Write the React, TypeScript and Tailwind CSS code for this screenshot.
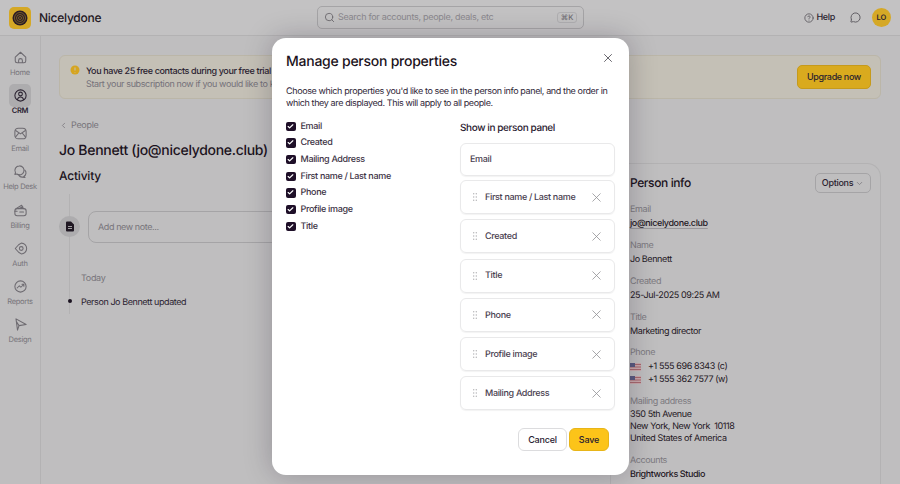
import { X, ChevronLeft, ChevronDown, Search, CircleHelp, MessageCircle, Check } from "lucide-react";

const navItems = [
  { label: "Home", icon: <path d="M3 9.5 10 3l7 6.5v5a2.5 2.5 0 0 1-2.5 2.5h-9A2.5 2.5 0 0 1 3 14.5v-5ZM7.5 17v-3a2.5 2.5 0 0 1 5 0v3" /> },
  { label: "CRM", active: true, icon: <><circle cx="10" cy="10" r="7.5" /><circle cx="10" cy="8" r="2.5" /><path d="M6 15.5c.5-2.3 2-3.5 4-3.5s3.5 1.2 4 3.5" /></> },
  { label: "Email", icon: <><rect x="2.5" y="3" width="15" height="14" rx="4.5" /><path d="M3.5 6 10 10.5 16.5 6M3.5 14.5 8 9M16.5 14.5 12 9" /></> },
  { label: "Help Desk", icon: <><path d="M8.5 2.5a6 6 0 0 0-5.2 9L2.5 14l2.6-.7A6 6 0 1 0 8.5 2.5Z" /><path d="M15.5 8a5 5 0 0 1-1.2 8.5l1.7 1.5-3.5-.5a5 5 0 0 1-5-3.5" /></> },
  { label: "Billing", icon: <><rect x="2.5" y="7.5" width="15" height="9.5" rx="3" /><path d="M4 7.5 11.5 3l2.5 4.5M7.5 7.5 13 5M9 12h5M2.5 11h3" /></> },
  { label: "Auth", icon: <><path d="M7.5 5 11 2.8a7 7 0 1 1 0 14.4L7.5 15 3 10Z" /><circle cx="11" cy="10" r="2.5" /></> },
  { label: "Reports", icon: <><circle cx="10" cy="10" r="7.5" /><path d="m5.5 12 3-3 2 2 4-4M12 7h2.5v2.5" /></> },
  { label: "Design", icon: <path d="M4 2.5 17.5 10 8 11.5 6 17.5 4 2.5ZM8 11.5 4.5 6" /> },
];

const fields = [
  { label: "Name", value: "Jo Bennett" },
  { label: "Created", value: "25-Jul-2025 09:25 AM" },
  { label: "Title", value: "Marketing director" },
];

const checks = ["Email", "Created", "Mailing Address", "First name / Last name", "Phone", "Profile image", "Title"];
const panelRows = ["First name / Last name", "Created", "Title", "Phone", "Profile image", "Mailing Address"];

function UsFlag() {
  return (
    <svg width="11" height="8" viewBox="0 0 11 8" className="shrink-0">
      <rect width="11" height="8" fill="#c9a9ac" />
      <path d="M0 1.5h11M0 4h11M0 6.5h11" stroke="#a8696f" strokeWidth="1" />
      <rect width="5" height="4" fill="#5a5a80" />
    </svg>
  );
}

function Logo() {
  return (
    <div className="w-[22px] h-[22px] rounded-[5px] bg-[#d5a826] flex items-center justify-center shrink-0">
      <svg width="16" height="16" viewBox="0 0 16 16" fill="none">
        <circle cx="8" cy="8" r="7.5" fill="#2a1c26" />
        <circle cx="8" cy="8" r="5.5" stroke="#8a6f2a" strokeWidth="0.8" />
        <circle cx="8" cy="8" r="3.5" stroke="#8a6f2a" strokeWidth="0.8" />
        <circle cx="8" cy="8" r="1.5" stroke="#8a6f2a" strokeWidth="0.8" />
      </svg>
    </div>
  );
}

function Grip() {
  return (
    <svg width="4" height="8" viewBox="0 0 4 8" fill="#b2b2b5" className="shrink-0">
      <circle cx="0.7" cy="0.8" r="0.7" /><circle cx="3.3" cy="0.8" r="0.7" />
      <circle cx="0.7" cy="4" r="0.7" /><circle cx="3.3" cy="4" r="0.7" />
      <circle cx="0.7" cy="7.2" r="0.7" /><circle cx="3.3" cy="7.2" r="0.7" />
    </svg>
  );
}

function PersonPanel() {
  return (
    <aside className="w-[271px] shrink-0 h-[340px] mt-[64px] rounded-t-[14px] border border-b-0 border-[#b3b2b3] pl-[19px] pr-[9px] pt-[9px]">
      <div className="flex items-center justify-between h-[20px]">
        <h2 className="text-[12px] tracking-[-0.4px] leading-[20px] font-medium text-[#1b1220]">Person info</h2>
        <button className="w-[56px] h-[20px] rounded-[5px] border border-[#a5a4a6] text-[9px] tracking-[-0.3px] font-medium text-[#2a2230] flex items-center justify-center gap-[2px]">
          Options
          <ChevronDown size={9} className="text-[#77747a]" />
        </button>
      </div>
      <div className="mt-[10px] text-[9px] tracking-[-0.4px] leading-[14px] text-[#1f1824]">
        <div className="h-[36px]">
          <div className="text-[#7d7a80]">Email</div>
          <div className="font-medium underline decoration-[#9a989c] underline-offset-2">jo@nicelydone.club</div>
        </div>
        {fields.map((f) => (
          <div key={f.label} className="h-[36px]">
            <div className="text-[#7d7a80]">{f.label}</div>
            <div>{f.value}</div>
          </div>
        ))}
        <div className="text-[#7d7a80] -mt-[1px]">Phone</div>
        <div className="flex items-center gap-[7px] h-[13px]"><UsFlag />+1 555 696 8343 (c)</div>
        <div className="flex items-center gap-[7px] h-[13px]"><UsFlag />+1 555 362 7577 (w)</div>
        <div className="mt-[9px] text-[#7d7a80]">Mailing address</div>
        <div className="leading-[12px]">350 5th Avenue</div>
        <div className="leading-[12px]">New York, New York&nbsp; 10118</div>
        <div className="leading-[12px]">United States of America</div>
        <div className="mt-[9px] text-[#7d7a80]">Accounts</div>
        <div className="font-medium">Brightworks Studio</div>
      </div>
    </aside>
  );
}

function ManageModal() {
  return (
    <div className="absolute inset-0 flex justify-center pointer-events-none">
      <div className="mt-[38px] ml-[1px] w-[357px] h-[437px] rounded-[14px] bg-white shadow-[0_0_28px_rgba(20,10,30,0.25)] px-[14px] pt-[13px] flex flex-col text-[#2a2030]">
        <div className="flex items-start justify-between">
          <h2 className="text-[14px] tracking-[-0.25px] leading-[22px] font-medium text-[#1b1220]">Manage person properties</h2>
          <X size={14} strokeWidth={1.5} className="text-[#55525a]" />
        </div>
        <p className="mt-[12.5px] text-[9px] tracking-[-0.38px] leading-[12.5px] text-[#2f2637]">
          Choose which properties you'd like to see in the person info panel, and the order in which they are displayed. This will apply to all people.
        </p>
        <div className="flex mt-[10.5px]">
          <ul className="w-[174px] shrink-0 -mt-[3px]">
            {checks.map((c) => (
              <li key={c} className="flex items-center gap-[5px] h-[16.67px] text-[9px] tracking-[-0.33px] font-medium text-[#3d3345]">
                <span className="w-[9.5px] h-[9.5px] rounded-[2px] bg-[#1e0f28] flex items-center justify-center">
                  <Check size={7} strokeWidth={4} className="text-white" />
                </span>
                {c}
              </li>
            ))}
          </ul>
          <div className="flex-1">
            <h3 className="text-[10px] tracking-[-0.4px] leading-[14px] font-medium text-[#2a2030]">Show in person panel</h3>
            <div className="mt-[8px] h-[33px] w-[155px] rounded-[6px] border border-[#e9e9ea] shadow-[0_1px_1px_rgba(0,0,0,0.05)] flex items-center px-[9px] text-[9px] tracking-[-0.33px] font-medium text-[#4a4150]">
              <span className="mt-[1px]">Email</span>
            </div>
            <div className="mt-[4px] flex flex-col gap-[5.3px]">
              {panelRows.map((r) => (
                <div key={r} className="h-[34px] w-[155px] rounded-[6px] border border-[#e9e9ea] shadow-[0_1px_1px_rgba(0,0,0,0.05)] flex items-center pl-[12px] pr-[10px] text-[9px] tracking-[-0.33px] font-medium text-[#4a4150]">
                  <Grip />
                  <span className="ml-[8px] mt-[1px] flex-1 whitespace-nowrap">{r}</span>
                  <X size={15} strokeWidth={1.25} className="text-[#8f8f93]" />
                </div>
              ))}
            </div>
          </div>
        </div>
        <div className="mt-[18px] flex justify-end gap-[2px] pr-[6px]">
          <button className="w-[49px] h-[23px] rounded-[6px] border border-[#dcdcde] text-[9px] tracking-[-0.2px] font-medium text-[#2a2030]">Cancel</button>
          <button className="w-[40px] h-[23px] rounded-[6px] bg-[#fcc419] border border-[#e8b518] text-[9px] tracking-[-0.2px] font-medium text-[#2a2030]">Save</button>
        </div>
      </div>
    </div>
  );
}

export default function App() {
  return (
    <div className="relative w-[900px] h-[484px] overflow-hidden bg-[#bfbebf] font-['Inter',sans-serif] [text-rendering:geometricPrecision] text-[#2a2230]">
      <header className="h-[36px] border-b border-[#b3b2b3] bg-[#c3c2c3] flex items-center pl-[9px] pr-[9px]">
        <Logo />
        <span className="ml-[8px] mt-[1px] w-[62px] whitespace-nowrap text-[12px] tracking-[-0.25px] font-medium text-[#1f1722]">Nicelydone</span>
        <div className="ml-[216px] w-[267px] h-[23px] rounded-[5px] border border-[#a5a4a6] flex items-center pl-[6px] pr-[6px]">
          <Search size={11} className="text-[#6d6a70]" />
          <span className="ml-[3px] mt-[1px] flex-1 text-[9px] tracking-[-0.28px] text-[#8a878d]">Search for accounts, people, deals, etc</span>
          <span className="w-[20px] h-[11px] rounded-[3px] border border-[#b0afb1] text-[7.5px] leading-[9px] text-[#6d6a70] text-center font-medium">⌘K</span>
        </div>
        <div className="ml-auto flex items-center">
          <CircleHelp size={10} className="text-[#5a575d]" />
          <span className="ml-[2px] mt-[1px] text-[9px] tracking-[-0.3px] font-medium text-[#2a2230]">Help</span>
          <MessageCircle size={11} className="ml-[15px] text-[#5a575d]" />
          <span className="ml-[11px] w-[19px] h-[19px] rounded-full bg-[#d5a826] text-[7.5px] font-semibold flex items-center justify-center">LO</span>
        </div>
      </header>
      <div className="flex h-[448px]">
        <nav className="w-[41px] shrink-0 border-r border-[#b3b2b3] flex flex-col items-center pt-[10px]">
          {navItems.map((n) => (
            <div key={n.label} className="h-[38.15px] w-full flex flex-col items-center">
              <div className={`w-[22px] h-[23px] rounded-[5px] flex items-center justify-center ${n.active ? "bg-[#adacae] text-[#2a2230]" : "text-[#6d6a70]"}`}>
                <svg width="15" height="15" viewBox="0 0 20 20" fill="none" stroke="currentColor" strokeWidth="1.4" strokeLinecap="round" strokeLinejoin="round">{n.icon}</svg>
              </div>
              <span className={`text-[7.5px] tracking-[-0.3px] leading-[10px] -mt-[1px] whitespace-nowrap ${n.active ? "font-semibold text-[#2a2230]" : "text-[#77747a]"}`}>{n.label}</span>
            </div>
          ))}
        </nav>
        <main className="flex-1 pl-[18px] pr-[19px] pt-[19px] min-w-0">
          <div className="h-[44px] rounded-[6px] border border-[#bbb6a8] bg-[#c4c0b6] flex items-center pl-[10px] pr-[9px]">
            <svg width="10" height="10" viewBox="0 0 10 10" className="self-start mt-[9px] shrink-0">
              <circle cx="5" cy="5" r="4.5" fill="#d6a520" />
              <path d="M5 2.5v3M5 7v.5" stroke="#c4c0b6" strokeWidth="1" />
            </svg>
            <div className="ml-[6px] mt-[3px] text-[9px] tracking-[-0.37px] leading-[12.5px]">
              <div className="font-medium text-[#2a2230]">You have 25 free contacts during your free trial</div>
              <div className="text-[#75727a]">Start your subscription now if you would like to keep using</div>
            </div>
            <button className="ml-auto w-[74px] h-[24px] rounded-[5px] bg-[#d9aa1e] border border-[#c69a1b] text-[9px] tracking-[-0.35px] font-medium text-[#2a2230]">Upgrade now</button>
          </div>
          <div className="flex">
            <section className="flex-1 min-w-0">
              <div className="mt-[20px] flex items-center text-[9px] tracking-[-0.3px] text-[#77747a]">
                <ChevronLeft size={9} />
                <span className="ml-[3px]">People</span>
              </div>
              <h1 className="mt-[6px] text-[14px] tracking-[-0.3px] leading-[24px] font-medium text-[#1b1220] whitespace-nowrap">Jo Bennett (jo@nicelydone.club)</h1>
              <h2 className="mt-[3px] text-[12px] tracking-[-0.2px] leading-[20px] font-medium text-[#1b1220]">Activity</h2>
              <div className="mt-[8px] ml-[10px] border-l border-[#b3b2b3] h-[120px] relative">
                <div className="absolute -left-[11px] top-[22px] w-[21px] h-[21px] rounded-full bg-[#adacae] flex items-center justify-center">
                  <svg width="10" height="11" viewBox="0 0 10 11">
                    <path d="M1 1.5A1 1 0 0 1 2 .5h4l3 3v6a1 1 0 0 1-1 1H2a1 1 0 0 1-1-1Z" fill="#1f1722" />
                    <path d="M3 5.5h4M3 7.5h4" stroke="#adacae" strokeWidth="0.9" />
                  </svg>
                </div>
                <div className="absolute left-[18px] top-[17px] w-[480px] h-[32px] rounded-[8px] border border-[#a5a4a6] flex items-center pl-[9px] pt-[2px] text-[9px] tracking-[-0.4px] text-[#77747a]">Add new note...</div>
                <div className="absolute left-[11px] top-[78px] text-[9px] tracking-[-0.3px] text-[#77747a]">Today</div>
                <div className="absolute -left-[2px] top-[105px] w-[4px] h-[4px] rounded-full bg-[#1b1220]" />
                <div className="absolute left-[11px] top-[102px] text-[9px] tracking-[-0.42px] text-[#2a2230] whitespace-nowrap">Person Jo Bennett updated</div>
              </div>
            </section>
            <PersonPanel />
          </div>
        </main>
      </div>
      <ManageModal />
    </div>
  );
}
